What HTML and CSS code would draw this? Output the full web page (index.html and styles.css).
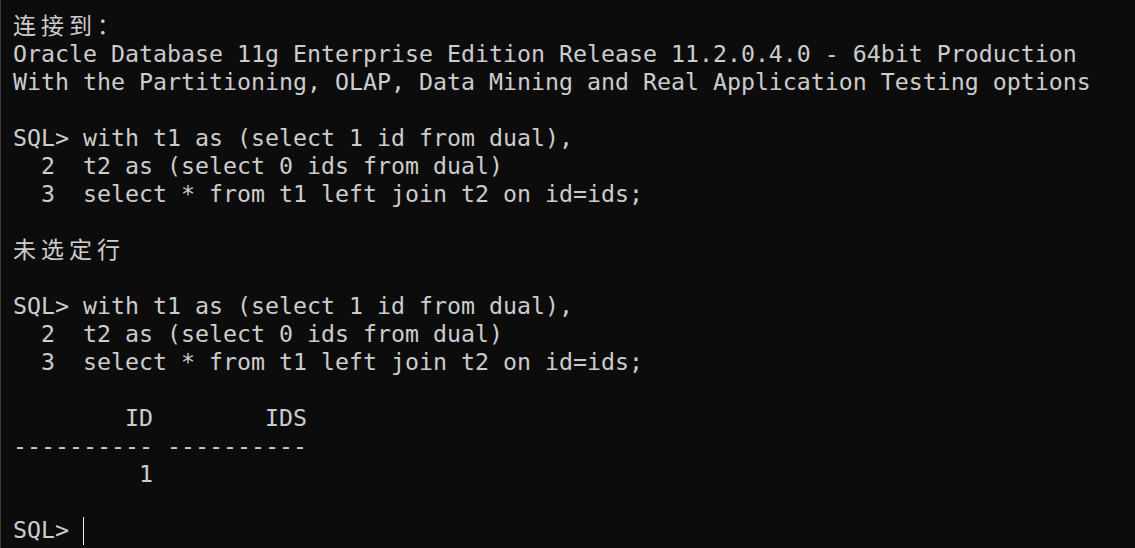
FILE: index.html
```html
<!DOCTYPE html>
<html lang="zh">
<head>
<meta charset="utf-8">
<title>SQL*Plus</title>
<link rel="stylesheet" href="styles.css">
</head>
<body>
<main class="terminal">
<pre class="screen"><span class="cjk">连接到：</span>
Oracle Database 11g Enterprise Edition Release 11.2.0.4.0 - 64bit Production
With the Partitioning, OLAP, Data Mining and Real Application Testing options

SQL&gt; with t1 as (select 1 id from dual),
  2  t2 as (select 0 ids from dual)
  3  select * from t1 left join t2 on id=ids;

<span class="cjk">未选定行</span>

SQL&gt; with t1 as (select 1 id from dual),
  2  t2 as (select 0 ids from dual)
  3  select * from t1 left join t2 on id=ids;

        ID        IDS
---------- ----------
         1

SQL&gt; <span class="cursor"></span></pre>
</main>
</body>
</html>
```

FILE: styles.css
```css
html, body {
  margin: 0;
  padding: 0;
  background: #0c0c0c;
  height: 100%;
  overflow: hidden;
}

.terminal {
  box-sizing: border-box;
  height: 100%;
  border-left: 1px solid #3c3c3c;
  padding: 12px 0 0 12px;
}

.screen {
  margin: 0;
  font-family: "DejaVu Sans Mono", "Noto Sans CJK SC", monospace;
  font-size: 23.25px;
  line-height: 28px;
  color: #cccccc;
  white-space: pre;
}

.cjk {
  font-family: "Noto Sans CJK SC", sans-serif;
  font-size: 23px;
  line-height: 0;
  letter-spacing: 5px;
}

.cursor {
  display: inline-block;
  width: 1px;
  height: 28px;
  line-height: 0;
  background: #f2f2f2;
  vertical-align: -7px;
}
```
